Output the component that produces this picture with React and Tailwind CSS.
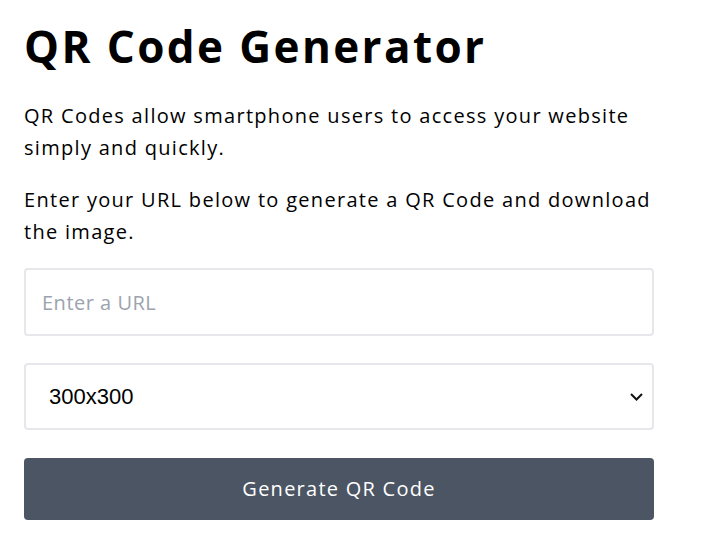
export default function App() {
  return (
    <div className="min-h-screen bg-white pt-6 px-6 font-['Open_Sans',sans-serif] text-black">
      <h1 className="text-[44px] leading-[44px] font-bold tracking-[2.4px]">QR Code Generator</h1>
      <div className="mt-8 max-w-[650px] text-[20px] leading-8 tracking-[1.3px]">
        <p className="mb-5">
          QR Codes allow smartphone users to access your website simply and quickly.
        </p>
        <p>Enter your URL below to generate a QR Code and download the image.</p>
      </div>
      <form className="mt-5 w-[630px] flex flex-col">
        <input
          type="url"
          placeholder="Enter a URL"
          className="h-[68px] border-2 border-[#e5e7eb] rounded px-4 text-[20px] tracking-[0.5px] placeholder:text-[#9ca3af] outline-none"
        />
        <div className="relative mt-[27px]">
          <select
            defaultValue="300"
            className="w-full h-[67px] appearance-none border-2 border-[#e5e7eb] rounded pl-[23px] pr-10 bg-white text-[22px] font-['Liberation_Sans',Arial,sans-serif] outline-none"
          >
            <option value="100">100x100</option>
            <option value="200">200x200</option>
            <option value="300">300x300</option>
            <option value="400">400x400</option>
          </select>
          <svg
            className="absolute right-[11px] top-[30px] pointer-events-none"
            width="13"
            height="8"
            viewBox="0 0 13 8"
            fill="none"
            stroke="#111"
            strokeWidth="2"
          >
            <polyline points="1,1 6.5,6.5 12,1" />
          </svg>
        </div>
        <button
          type="button"
          className="mt-7 h-[62px] rounded bg-[#4b5563] text-white text-[20px] tracking-[1.25px]"
        >
          Generate QR Code
        </button>
      </form>
    </div>
  );
}
